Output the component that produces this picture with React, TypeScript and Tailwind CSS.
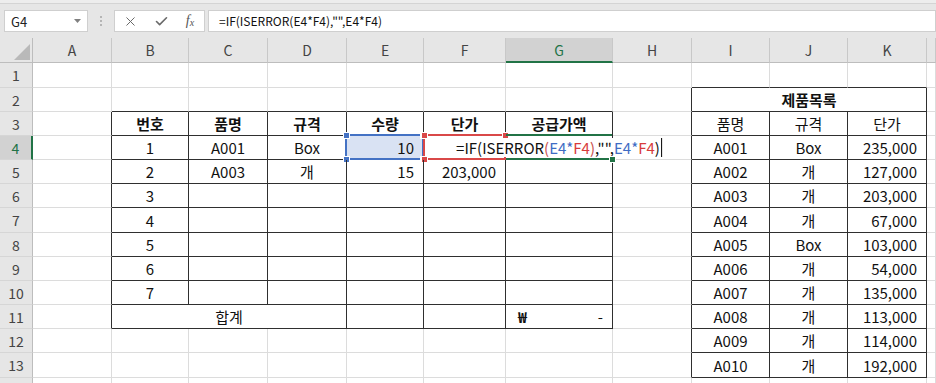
import type { ReactNode } from "react";
import clsx from "clsx";
import { X, Check } from "lucide-react";

const ROW_H = [25, 24, 24, 24, 24, 24, 25, 24, 24, 24, 24, 24, 25, 24];
const COLS = ["A", "B", "C", "D", "E", "F", "G", "H", "I", "J", "K", "L"];
const GRID =
  "grid grid-cols-[33px_79px_77px_79px_79px_77px_82px_107px_79px_78px_78px_79px_1fr]";

const products = [
  ["A001", "Box", "235,000"],
  ["A002", "개", "127,000"],
  ["A003", "개", "203,000"],
  ["A004", "개", "67,000"],
  ["A005", "Box", "103,000"],
  ["A006", "개", "54,000"],
  ["A007", "개", "135,000"],
  ["A008", "개", "113,000"],
  ["A009", "개", "114,000"],
  ["A010", "개", "192,000"],
];

type Cell = { text?: ReactNode; span?: number; align?: "c" | "r" | "acct"; bold?: boolean };

const inLeft = (r: number, c: number) => r >= 3 && r <= 11 && c >= 1 && c <= 6;
const inRight = (r: number, c: number) => r >= 2 && r <= 13 && c >= 8 && c <= 10;
const inTable = (r: number, c: number) => inLeft(r, c) || inRight(r, c);

function getCell(r: number, c: number): Cell {
  if (r === 2 && c === 8) return { text: "제품목록", span: 3, align: "c", bold: true };
  if (r === 3) {
    const left = ["번호", "품명", "규격", "수량", "단가", "공급가액"];
    if (c >= 1 && c <= 6) return { text: left[c - 1], align: "c", bold: true };
    const right = ["품명", "규격", "단가"];
    if (c >= 8 && c <= 10) return { text: right[c - 8], align: "c" };
  }
  if (r >= 4 && r <= 13 && c >= 8 && c <= 10) {
    const p = products[r - 4];
    return { text: p[c - 8], align: c === 10 ? "r" : "c" };
  }
  if (r >= 4 && r <= 10 && c === 1) return { text: String(r - 3), align: "c" };
  if (r === 4) {
    if (c === 2) return { text: "A001", align: "c" };
    if (c === 3) return { text: "Box", align: "c" };
    if (c === 4) return { text: "10", align: "r" };
  }
  if (r === 5) {
    if (c === 2) return { text: "A003", align: "c" };
    if (c === 3) return { text: "개", align: "c" };
    if (c === 4) return { text: "15", align: "r" };
    if (c === 5) return { text: "203,000", align: "r" };
  }
  if (r === 11) {
    if (c === 1) return { text: "합계", span: 3, align: "c" };
    if (c === 6) return { align: "acct" };
  }
  return {};
}

const Handle = ({ className }: { className: string }) => (
  <div className={clsx("absolute w-[7px] h-[7px] border border-white", className)} />
);

const FormulaEdit = () => (
  <div className="absolute left-1/2 -translate-x-1/2 top-[2px] bottom-[2px] z-10 flex items-center bg-white px-[3px] whitespace-nowrap">
    <span>=IF(ISERROR</span>
    <span className="text-[#c9504b]">(</span>
    <span className="text-[#3e6cc4]">E4*</span>
    <span className="text-[#d83b3b]">F4</span>
    <span className="text-[#c9504b]">)</span>
    <span>,"",</span>
    <span className="text-[#3e6cc4]">E4*</span>
    <span className="text-[#d83b3b]">F4</span>
    <span>)</span>
    <span className="ml-[1px] w-[1px] h-[19px] bg-black" />
  </div>
);

function DataRow({ r }: { r: number }) {
  const cells: ReactNode[] = [];
  const active = r === 4;
  cells.push(
    <div
      key="h"
      className={clsx(
        "flex items-center justify-center border-b border-b-[#d6d6d6] text-[14px]",
        active
          ? "bg-[#d2d2d2] text-[#217346] border-r-2 border-r-[#217346]"
          : "bg-[#e6e6e6] text-[#444] border-r border-r-[#bdbdbd]"
      )}
    >
      {r <= 13 ? r : null}
    </div>
  );
  for (let c = 0; c < COLS.length; c++) {
    const cell = getCell(r, c);
    const span = cell.span ?? 1;
    const last = c + span - 1;
    const rightDark = inTable(r, last) || inTable(r, last + 1);
    const bottomDark = inTable(r, c) || inTable(r + 1, c);
    const isE4 = r === 4 && c === 4;
    const isF4 = r === 4 && c === 5;
    const isG4 = r === 4 && c === 6;
    cells.push(
      <div
        key={c}
        className={clsx(
          "relative flex items-center border-r border-b min-w-0",
          span === 3 && "col-span-3",
          rightDark ? "border-r-[#2f2f2f]" : "border-r-[#dcdcdc]",
          bottomDark ? "border-b-[#2f2f2f]" : "border-b-[#dcdcdc]",
          cell.align === "c" && "justify-center",
          cell.align === "r" && "justify-end pr-[9px]",
          cell.align === "acct" && "justify-between pl-[12px] pr-[9px]",
          cell.bold && "font-bold",
          isE4 && "bg-[#d9e2f3]"
        )}
      >
        {cell.align === "acct" ? (
          <>
            <span className="font-bold">₩</span>
            <span>-</span>
          </>
        ) : (
          cell.text
        )}
        {isE4 && (
          <>
            <div className="absolute -left-[2px] -top-[2px] -right-[1px] -bottom-[1px] border-2 border-[#4472c4]" />
            <Handle className="bg-[#4472c4] -left-[4px] -top-[4px]" />
            <Handle className="bg-[#4472c4] -right-[4px] -top-[4px]" />
            <Handle className="bg-[#4472c4] -left-[4px] -bottom-[4px]" />
            <Handle className="bg-[#4472c4] -right-[4px] -bottom-[4px]" />
          </>
        )}
        {isF4 && (
          <>
            <div className="absolute -left-[1px] -top-[2px] -right-[1px] -bottom-[1px] border-2 border-[#d94848]" />
            <Handle className="bg-[#d94848] -left-[3px] -top-[4px]" />
            <Handle className="bg-[#d94848] -right-[4px] -top-[4px]" />
            <Handle className="bg-[#d94848] -left-[3px] -bottom-[4px]" />
          </>
        )}
        {isG4 && (
          <>
            <div className="absolute left-0 -top-[2px] right-0 h-[2px] bg-[#217346]" />
            <div className="absolute left-0 -bottom-[1px] right-0 h-[2px] bg-[#217346]" />
            <FormulaEdit />
            <Handle className="bg-[#217346] -right-[4px] -bottom-[4px] z-20" />
          </>
        )}
      </div>
    );
    c = last;
  }
  return (
    <div className={clsx(GRID, ROW_H[r - 1] === 25 ? "h-[25px]" : "h-[24px]")}>{cells}</div>
  );
}

export default function App() {
  return (
    <div className="w-[936px] h-[383px] overflow-hidden bg-white text-[15px] leading-none text-[#111] font-['Noto_Sans_CJK_KR','Noto_Sans',sans-serif]">
      {/* formula bar */}
      <div className="h-[38px] bg-[#e6e6e6]">
        <div className="h-[4px] bg-[#ededed] border-b border-[#d4d4d4]" />
        <div className="flex items-start pt-[6px] pl-[4px]">
          <div className="w-[84px] h-[22px] bg-white border border-[#cfcfcf] flex items-center justify-between pl-[6px] pr-[6px]">
            <span className="text-[13px] text-[#222]">G4</span>
            <svg width="7" height="4" viewBox="0 0 7 4">
              <path d="M0 0h7L3.5 4z" fill="#808080" />
            </svg>
          </div>
          <div className="w-[26px] h-[22px] flex flex-col items-center justify-center gap-[2px]">
            <span className="w-[2px] h-[2px] bg-[#b5b5b5]" />
            <span className="w-[2px] h-[2px] bg-[#b5b5b5]" />
            <span className="w-[2px] h-[2px] bg-[#b5b5b5]" />
          </div>
          <div className="w-[91px] h-[22px] bg-white border border-[#cfcfcf] flex items-center text-[#6a6a6a]">
            <div className="w-[31px] flex justify-center">
              <X size={15} strokeWidth={1.6} />
            </div>
            <div className="w-[30px] flex justify-center">
              <Check size={15} strokeWidth={2.6} />
            </div>
            <div className="w-[28px] flex justify-center font-['Liberation_Serif',serif] italic text-[14px] text-[#555]">
              f<span className="text-[10px] mt-[4px]">x</span>
            </div>
          </div>
          <div className="ml-[3px] flex-1 h-[22px] bg-white border border-[#cfcfcf] flex items-center pl-[10px] text-[12px] text-[#111]">
            =IF(ISERROR(E4*F4),"",E4*F4)
          </div>
        </div>
      </div>

      {/* column headers */}
      <div className={clsx(GRID, "h-[25px]")}>
        <div className="relative bg-[#e6e6e6] border-r border-b border-[#bdbdbd]">
          <svg className="absolute right-[2px] bottom-[2px]" width="16" height="16" viewBox="0 0 16 16">
            <path d="M16 0V16H0Z" fill="#b9b9b9" />
          </svg>
        </div>
        {COLS.map((l) => (
          <div
            key={l}
            className={clsx(
              "flex items-center justify-center text-[14px] border-r border-r-[#c8c8c8]",
              l === "G"
                ? "bg-[#d2d2d2] text-[#217346] border-b-2 border-b-[#217346]"
                : "bg-[#e6e6e6] text-[#444] border-b border-b-[#bdbdbd]"
            )}
          >
            {l === "L" ? null : l}
          </div>
        ))}
      </div>

      {ROW_H.map((_, i) => (
        <DataRow key={i} r={i + 1} />
      ))}
    </div>
  );
}
